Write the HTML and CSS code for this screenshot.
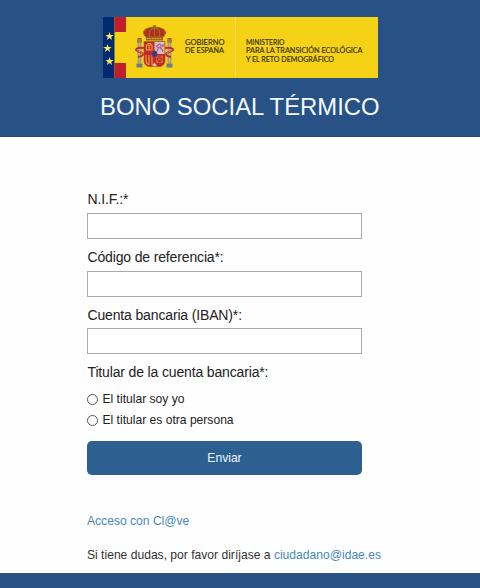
FILE: index.html
```html
<!DOCTYPE html>
<html lang="es">
<head>
<meta charset="utf-8">
<title>Bono Social Térmico</title>
<link rel="stylesheet" href="styles.css">
</head>
<body>
<header class="header">
  <svg class="logo" viewBox="0 0 275 61" role="img" aria-label="Gobierno de España">
    <rect width="275" height="61" fill="#f6d216"/>
    <rect width="11.5" height="61" fill="#002b73"/>
    <path fill="#c11e2b" d="M11.500 0h11.500v15h-11.500zM11.500 46h11.500v15h-11.500z"/>
    <g fill="#ffe45c">
      <path id="star" d="M6.500 15l1 3h3.200l-2.500 1.900.9 3-2.600-1.800-2.600 1.800.9-3-2.500-1.900h3.200z"/>
      <use href="#star" x="-2" y="12"/>
      <use href="#star" x="0" y="25"/>
    </g>
    <g>
      <!-- pillars -->
      <path fill="#b9b09a" stroke="#82704b" stroke-width=".5" d="M35 25h3v21h-3zM65 25h3v21h-3z"/>
      <path fill="#a78124" d="M34 22.500h5v3h-5zM64 22.500h5v3h-5z"/>
      <path fill="#b4421d" d="M34.500 21h4v1.500h-4zM64.500 21h4v1.500h-4z"/>
      <path fill="#6f7d83" d="M33.500 46.500h6v4h-6zM63.500 46.500h6v4h-6z"/>
      <path fill="none" stroke="#c52a30" stroke-width="2" d="M41 31c-5-1-8 .5-8 2s7 2 7 4-3 3-5 2.500M62 31c5-1 8 .5 8 2s-7 2-7 4 3 3 5 2.500"/>
      <path fill="none" stroke="#ead7a7" stroke-width=".5" d="M34 33c2 2 5 1.500 5.500 4M69 33c-2 2-5 1.500-5.500 4"/>
      <!-- crown -->
      <path fill="#b52b23" d="M43 20c-6-6 0-9.500 8.500-10 8.500.5 14.500 4 8.500 10z"/>
      <path fill="none" stroke="#9d711f" stroke-width="1.200" d="M43 20c-6-6 0-9.500 8.500-10 8.500.5 14.500 4 8.500 10M51.500 8v12M47 20c-2-4-.5-8 4.500-9.500 5 1.500 6.500 5.500 4.500 9.500M49.800 9.200h3.400"/>
      <path fill="#9b681e" d="M43 19.500h17v4h-17z"/>
      <path stroke="#e8c52d" stroke-width=".8" stroke-dasharray="1.500 1" d="M44 21.500h15"/>
      <!-- shield -->
      <path fill="#c92230" stroke="#94582a" stroke-width=".6" d="M41 24.500h21v19.500c0 3-2.500 5.500-5.500 5.500h-10c-3 0-5.500-2.500-5.500-5.500z"/>
      <path fill="#d7bec7" d="M51.500 25h10v12h-10z"/>
      <path fill="none" stroke="#ac6489" stroke-width="1.300" d="M54 34l1.500-3-2-2 3-2 2 1.500-1 2.500 2 2v2M57 30l-2.500 1.500M60 27v3"/>
      <path fill="none" stroke="#dda62f" stroke-width="1.200" d="M43.500 33v-5h1.500v-1.500h2.500V28H49v5zM46.200 28v5M43 38v5.500c0 2 1 3.500 3 4.500M46 38v10M49 38v10"/>
      <path fill="none" stroke="#d2872d" stroke-width=".7" d="M53.500 39h6v6.500h-6zl6 6.500m0-6.500l-6 6.500"/>
      <path fill="#d5c3a0" d="M49 48.500l2.500-3 2.500 3-2.500 1z"/>
      <ellipse cx="51.500" cy="37" rx="2.700" ry="3.200" fill="#263f8a" stroke="#b63145" stroke-width=".7"/>
    </g>
    <path stroke="#f0df70" stroke-width=".7" d="M132.500 0v61"/>
    <g class="logo-text">
      <text x="82" y="28.300" textLength="39.500" lengthAdjust="spacingAndGlyphs">GOBIERNO</text>
      <text x="82" y="36.300" textLength="39" lengthAdjust="spacingAndGlyphs">DE ESPAÑA</text>
      <text x="143" y="28.300" textLength="38.500" lengthAdjust="spacingAndGlyphs">MINISTERIO</text>
      <text x="143" y="36.300" textLength="116.500" lengthAdjust="spacingAndGlyphs">PARA LA TRANSICIÓN ECOLÓGICA</text>
      <text x="143" y="44.500" textLength="88" lengthAdjust="spacingAndGlyphs">Y EL RETO DEMOGRÁFICO</text>
    </g>
  </svg>
  <h1 class="title">BONO SOCIAL TÉRMICO</h1>
</header>
<main class="main">
  <form class="form">
    <label class="label" for="nif">N.I.F.:*</label>
    <input class="input" id="nif" type="text">
    <label class="label" for="ref">Código de referencia*:</label>
    <input class="input" id="ref" type="text">
    <label class="label" for="iban">Cuenta bancaria (IBAN)*:</label>
    <input class="input" id="iban" type="text">
    <div class="label">Titular de la cuenta bancaria*:</div>
    <label class="option"><input class="radio" type="radio" name="titular"><span>El titular soy yo</span></label>
    <label class="option"><input class="radio" type="radio" name="titular"><span>El titular es otra persona</span></label>
    <button class="submit" type="button">Enviar</button>
  </form>
  <p class="access"><a class="link" href="#">Acceso con Cl@ve</a></p>
  <p class="help">Si tiene dudas, por favor diríjase a <a class="link" href="#">ciudadano@idae.es</a></p>
</main>
<footer class="footer"></footer>
</body>
</html>
```
FILE: styles.css
```css
* { box-sizing: border-box; }
body {
  margin: 0;
  height: 588px;
  display: flex;
  flex-direction: column;
  background: #fefefe;
  color: #222;
  font-family: "Liberation Sans", Arial, sans-serif;
}
.header {
  height: 137px;
  flex: none;
  padding-top: 17px;
  background: #285285;
  border-bottom: 1px solid #1f497e;
}
.logo {
  display: block;
  width: 275px;
  height: 61px;
  margin-left: 103px;
}
.logo-text {
  font: 500 7.4px Lato, sans-serif;
  fill: #3d3511;
  stroke: #3d3511;
  stroke-width: .15px;
}
.title {
  margin: 15px 0 0 100px;
  font-size: 23.850px;
  line-height: 28px;
  font-weight: 400;
  color: #f4faff;
  white-space: nowrap;
}
.main {
  flex: 1;
  padding: 54px 0 0 87px;
}
.form {
  width: 275px;
  display: flex;
  flex-direction: column;
}
.label {
  height: 21.800px;
  padding-left: .5px;
  font-size: 14px;
  letter-spacing: -.150px;
  line-height: 17px;
}
.input {
  height: 26px;
  margin: 0 0 10px;
  padding: 0 6px;
  border: 1px solid #aaa;
  border-radius: 0;
  background: #fff;
}
.option {
  display: flex;
  align-items: center;
  height: 21px;
  gap: 4.500px;
  font-size: 12.100px;
}
.label + .option { margin-top: 2px; }
.radio {
  appearance: none;
  width: 11px;
  height: 11px;
  margin: 1px 0 0;
  border: 1px solid #555;
  border-radius: 50%;
  background: #fff;
}
.submit {
  height: 34px;
  margin-top: 11px;
  padding: 0;
  border: 0;
  border-radius: 5px;
  background: #2d5f91;
  color: #edf6ff;
  font: 12.100px "Liberation Sans", Arial, sans-serif;
}
.access, .help {
  margin: 0;
  font-size: 12.100px;
  line-height: 16px;
  color: #333;
  white-space: nowrap;
}
.access { margin-top: 38px; }
.help { margin-top: 18px; }
.link { color: #4689bd; text-decoration: none; }
.footer {
  flex: none;
  height: 15px;
  background: #285285;
}
```
